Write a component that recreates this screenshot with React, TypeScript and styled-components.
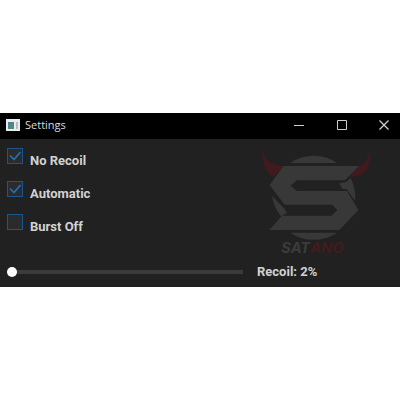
import React, { useState } from "react";
import styled, { createGlobalStyle } from "styled-components";

const GlobalStyle = createGlobalStyle`
  * { box-sizing: border-box; }
  body { margin: 0; background: #ffffff; }
`;

const Page = styled.main`
  min-height: 100vh;
  display: flex;
  flex-direction: column;
  justify-content: center;
`;

const Window = styled.section`
  background: #212121;
  color: #d2d2d2;
  font-family: Roboto, "Liberation Sans", sans-serif;
`;

const TitleBar = styled.header`
  display: flex;
  align-items: center;
  height: 26px;
  padding: 0 1px 2px 6px;
  background: #000000;
`;

const AppIcon = styled.svg`
  width: 14px;
  height: 12px;
  margin-right: 5px;
`;

const Title = styled.h1`
  flex: 1;
  margin: 0;
  font: 400 11px/16px "Open Sans", "Noto Sans", sans-serif;
  color: #dcdcdc;
`;

const WindowButton = styled.button`
  display: flex;
  align-items: center;
  justify-content: center;
  width: 43px;
  height: 24px;
  padding: 0;
  border: 0;
  background: transparent;
  color: #cfcfcf;

  &:last-child {
    width: 30px;
    margin-left: 6px;
  }
`;

const Body = styled.div`
  padding: 9px 28px 5px 7px;
`;

const Top = styled.div`
  display: flex;
  justify-content: space-between;
  align-items: flex-start;
`;

const Options = styled.div`
  display: grid;
  gap: 9px;
`;

const Option = styled.label`
  display: flex;
  align-items: flex-start;
  gap: 7px;
  height: 24px;
`;

const OptionText = styled.span`
  padding-top: 5px;
  font-size: 13px;
  font-weight: 700;
  line-height: 16px;
`;

const CheckField = styled.span`
  display: grid;
  width: 16px;
  height: 16px;

  > * { grid-area: 1 / 1; }
`;

const Check = styled.input`
  appearance: none;
  width: 16px;
  height: 16px;
  margin: 0;
  border: 1px solid #16578f;
  background: #2b2b2d;
`;

const Tick = styled.svg`
  width: 16px;
  height: 16px;
  pointer-events: none;
`;

const Logo = styled.svg`
  width: 120px;
  height: 112px;
  margin-right: 2px;
`;

const SliderRow = styled.div`
  display: flex;
  align-items: center;
  gap: 14px;
  height: 20px;
  margin-top: 2px;
`;

const Slider = styled.input`
  appearance: none;
  flex: 1;
  min-width: 0;
  max-width: 236px;
  height: 10px;
  margin: 0;
  background: linear-gradient(#3b3b3b, #3b3b3b) center / 100% 4px no-repeat;

  &::-webkit-slider-thumb {
    appearance: none;
    width: 10px;
    height: 10px;
    border-radius: 50%;
    background: #ffffff;
  }
`;

const SliderLabel = styled.label`
  font-size: 13px;
  font-weight: 700;
  line-height: 16px;
`;

function CheckOption({ label, initial }: { label: string; initial: boolean }) {
  const [checked, setChecked] = useState(initial);
  return (
    <Option>
      <CheckField>
        <Check type="checkbox" checked={checked} onChange={(e) => setChecked(e.target.checked)} />
        {checked && (
          <Tick viewBox="0 0 16 16" fill="none" stroke="#2173b5" strokeWidth="1.6">
            <path d="M3 7.5l4 4L13.5 4" />
          </Tick>
        )}
      </CheckField>
      <OptionText>{label}</OptionText>
    </Option>
  );
}

export default function App() {
  const [recoil, setRecoil] = useState(2);
  return (
    <>
      <GlobalStyle />
      <Page>
        <Window>
          <TitleBar>
            <AppIcon viewBox="0 0 14 12" aria-hidden="true">
              <defs>
                <linearGradient id="pane" x2="0.6" y2="1">
                  <stop offset="0" stopColor="#4d7c9c" />
                  <stop offset="1" stopColor="#4d9079" />
                </linearGradient>
              </defs>
              <path fill="#e9eded" d="M0 0h14v12H0z" />
              <path fill="url(#pane)" d="M2 3h6v7H2z" />
              <path fill="#b5bdc1" d="M10 3h2v7h-2z" />
            </AppIcon>
            <Title>Settings</Title>
            <WindowButton aria-label="Minimize">
              <svg width="10" height="10" viewBox="0 0 10 10" stroke="currentColor"><path d="M0 5.5h10" /></svg>
            </WindowButton>
            <WindowButton aria-label="Maximize">
              <svg width="10" height="10" viewBox="0 0 10 10" fill="none" stroke="currentColor"><path d="M.5.5h9v9h-9z" /></svg>
            </WindowButton>
            <WindowButton aria-label="Close">
              <svg width="10" height="10" viewBox="0 0 10 10" stroke="currentColor" strokeWidth="1.3"><path d="M.5.5l9 9M9.5.5l-9 9" /></svg>
            </WindowButton>
          </TitleBar>
          <Body>
            <Top>
              <Options>
                <CheckOption label="No Recoil" initial />
                <CheckOption label="Automatic" initial />
                <CheckOption label="Burst Off" initial={false} />
              </Options>
              <Logo viewBox="0 24 360 336" role="img" aria-label="Satano">
                <g fill="#383838">
                  <path d="M121 69A125 125 0 0 1 261 69Z" />
                  <path d="M121 278A125 125 0 0 0 261 278Z" />
                  <path d="M267 130L288 126L302 114A125 125 0 0 1 315 182L290 148L278 147Z" />
                  <path d="M66 167L101 204L111 219L93 229A125 125 0 0 1 66 167Z" />
                  <path d="M100 78H328L285 121H141L122 137L140 153H291L325 210L268 270H58L96 227H245L262 210L247 194H104L59 135Z" />
                </g>
                <path d="M36 26C42 54 58 76 100 77L72 109C48 104 36 66 36 26Z" fill="#421a1d" />
                <path d="M361 26C354 54 347 72 328 78L296 111C350 110 361 88 361 26Z" fill="#421a1d" />
                <text x="94" y="339" fontFamily="Inter, sans-serif" fontSize="44" fontWeight="700" fontStyle="italic" fill="#3b3b3b">
                  SAT<tspan fill="#431b1e">ANO</tspan>
                </text>
              </Logo>
            </Top>
            <SliderRow>
              <Slider id="recoil" type="range" min="2" max="100" value={recoil} onChange={(e) => setRecoil(Number(e.target.value))} />
              <SliderLabel htmlFor="recoil">Recoil: {recoil}%</SliderLabel>
            </SliderRow>
          </Body>
        </Window>
      </Page>
    </>
  );
}
